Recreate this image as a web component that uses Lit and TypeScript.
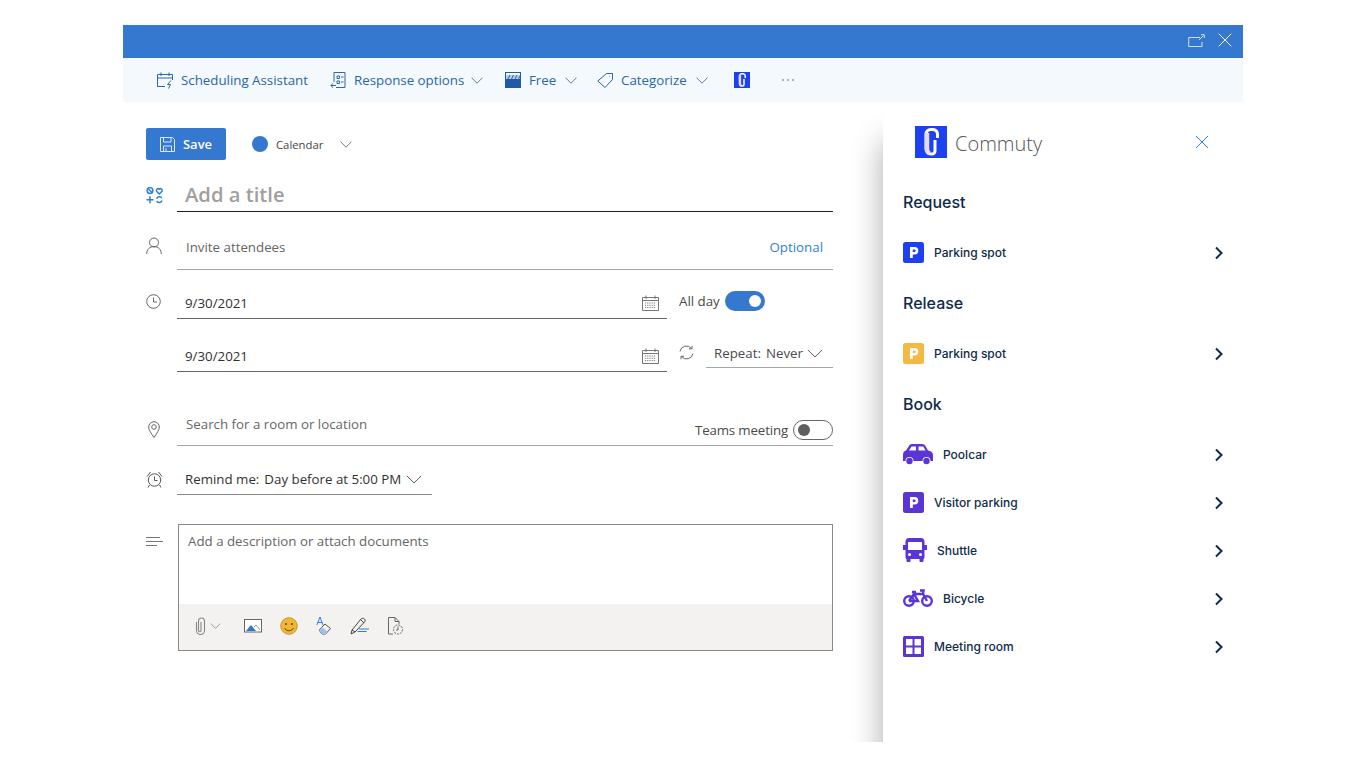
import { LitElement, html, css, svg } from "lit";
import { customElement } from "lit/decorators.js";

const chev = (c = "#5a7fa8", w = 12) => html`<svg class="chev" width=${w} height=${Math.round((w * 7) / 12)} viewBox="0 0 12 7" fill="none"><path d="M.5.7 6 6.200 11.500.7" stroke=${c} stroke-width=${12 / w}/></svg>`;
const logo = (s: number) => html`<svg width=${s} height=${s} viewBox="0 0 32 32"><rect width="32" height="32" fill="#1c41f2"/><path d="M22.500 12V8A4.500 4.500 0 0 0 18 3.500h-2.500A4.500 4.500 0 0 0 11 8v15a5 5 0 0 0 5 5h1a3 3 0 0 0 3-3V14" fill="none" stroke="#fff" stroke-width="3"/><path d="M12 7v16c0 2 1 3.500 2.500 4.500" fill="none" stroke="#e4dcff" stroke-width="4.500"/></svg>`;
const ico = (w: number, h: number, body: unknown, stroke = "#666") => html`<svg width=${w} height=${h} viewBox="0 0 ${w} ${h}" fill="none" stroke=${stroke} stroke-width="1">${body}</svg>`;

const tbBlue = "#2a66a8";
const calSmall = ico(17, 16, svg`<path d="M.5 2.500h16v13H.5zM.5 5.500h16M4 .5v3.500M13 .5v3.500"/><path d="M3 8h11M3 10.300h11M3 12.600h11" stroke-dasharray="1.200 1"/>`, "#777");

const pIcon = (c: string) => html`<svg width="21" height="21" viewBox="0 0 21 21"><rect width="21" height="21" rx="2.500" fill=${c}/><path d="M7 16V5h4.600a3.700 3.700 0 0 1 0 7.400H9.800V16zM9.800 7.400v2.700h1.500a1.350 1.350 0 0 0 0-2.700z" fill="#fff" fill-rule="evenodd"/></svg>`;
const purple = "#5b34d6";
const car = html`<svg width="30" height="21" viewBox="0 0 30 21"><path fill-rule="evenodd" fill=${purple} d="M9 0h10c1.700 0 2.800.8 3.600 2.200L25 6.500c3 .6 5 1.800 5 4.500v6h-2.500a4 4 0 0 0-8 0h-9a4 4 0 0 0-8 0H0v-6c0-2.500 1-4 3-4.500l2.800-4.300C6.600.8 7.400 0 9 0zM8.500 2.500 6 6.500h7V2.500zM15.500 2.500v4h7l-2.200-4z"/><circle cx="6.500" cy="17" r="3.200" fill=${purple}/><circle cx="23.500" cy="17" r="3.200" fill=${purple}/></svg>`;
const bus = html`<svg width="24" height="24" viewBox="0 0 24 24"><path fill-rule="evenodd" fill=${purple} d="M6 0h12c2 0 3.500 1.500 3.500 3.500V7H24v5h-2.500v7.500c0 .8-.5 1.300-1 1.500v2a1 1 0 0 1-1 1h-2a1 1 0 0 1-1-1v-2h-9v2a1 1 0 0 1-1 1h-2a1 1 0 0 1-1-1v-2c-.5-.2-1-.7-1-1.500V12H0V7h2.500V3.500C2.500 1.500 4 0 6 0zM5 4v8h14V4zM6.500 15a1.500 1.500 0 1 0 0 3 1.500 1.500 0 0 0 0-3zM17.500 15a1.500 1.500 0 1 0 0 3 1.500 1.500 0 0 0 0-3z"/></svg>`;
const bike = html`<svg width="30" height="18" viewBox="0 0 30 18" fill="none" stroke=${purple} stroke-width="2.400"><circle cx="6" cy="12" r="4.800"/><circle cx="24" cy="12" r="4.800"/><path d="M6 12 11 5h9l4 7M11 5l4 7H6M17 1.500h3.500L20 5M9 3h4"/></svg>`;
const room = html`<svg width="21" height="21" viewBox="0 0 21 21"><rect width="21" height="21" rx="1.500" fill=${purple}/><path d="M3 3h6.500v6.500H3zM11.500 3H18v6.500h-6.500zM3 11.500h6.500V18H3zM11.500 11.500H18V18h-6.500z" fill="#fff"/></svg>`;

@customElement("app-root")
export class AppRoot extends LitElement {
  static styles = css`
    :host { display: block; height: 768px; background: #fff; font-family: "Open Sans", "Noto Sans", sans-serif; }
    svg { display: block; flex: none; }
    .win { position: relative; top: 25px; margin-left: 123px; width: 1120px; height: 717px; display: flex; flex-direction: column; overflow: hidden; }
    .title { height: 33px; flex: none; background: #3578cf; display: flex; align-items: center; justify-content: flex-end; gap: 13px; padding: 0 11px 3px 0; box-sizing: border-box; }
    .tb { height: 44px; flex: none; background: #f3f9fc; display: flex; align-items: center; color: #2a66a8; font-size: 13.300px; padding-left: 34px; }
    .tb .it { display: flex; align-items: center; gap: 7px; flex: none; }
    .tb .chev { margin-left: 1px; }
    .tb .i2 .chev { margin-left: 0; }
    .tb .i4 .chev { margin-left: 2px; }
    .tb .i3 { gap: 8px; }
    .i1 { width: 173px; } .i2 { width: 175px; } .i3 { width: 92px; } .i4 { width: 137px; } .i5 { width: 48px; }
    .dots { display: flex; gap: 2px; }
    .dots b { width: 2px; height: 2px; border-radius: 50%; background: #7d9fc6; margin-right: 1px; }
    .main { flex: 1; display: flex; min-height: 0; }
    .form { width: 760px; flex: none; padding: 26px 50px 0 23px; box-sizing: border-box; color: #323130; font-size: 13.300px; }
    .bar { display: flex; align-items: center; height: 32px; }
    .save { width: 80px; height: 32px; background: #3578cf; border-radius: 2px; color: #fff; font-weight: 600; font-size: 13px; display: flex; align-items: center; justify-content: center; gap: 8px; }
    .cal-dot { width: 16px; height: 16px; border-radius: 50%; background: #3578cf; margin-left: 26px; }
    .cal-name { font-size: 11.300px; margin-left: 8px; margin-right: 17px; color: #444; }
    .row { display: flex; }
    .ic { width: 31px; flex: none; }
    .f { flex: 1; box-sizing: border-box; display: flex; align-items: center; min-width: 0; }
    .r-title { margin-top: 19px; height: 33px; }
    .r-title .f { border-bottom: 1px solid #201f1e; font-size: 20.200px; font-weight: 600; color: #a19f9d; padding-left: 8px; padding-bottom: 3px; }
    .r-title .ic { padding-top: 8px; }
    .r-inv { margin-top: 14px; height: 44px; }
    .r-inv .f { border-bottom: 1px solid #a6a6a6; padding: 0 10px 2px 9px; justify-content: space-between; color: #666; }
    .r-inv .ic { padding-top: 11px; }
    .opt { color: #2f7fd6; }
    .r-date { margin-top: 16px; height: 33px; }
    .r-date2 { margin-top: 20px; height: 33px; }
    .r-date .ic { padding-top: 8px; }
    .dt { width: 490px; flex: none; border-bottom: 1px solid #666; justify-content: space-between; padding: 2px 8px 0 8px; }
    .allday { display: flex; align-items: center; gap: 5px; margin-left: 12px; height: 30px; color: #4a4a4a; }
    .tg { width: 40px; height: 20px; border-radius: 10px; background: #3578cf; display: flex; align-items: center; justify-content: flex-end; padding: 0 4px; box-sizing: border-box; }
    .tg i { width: 12px; height: 12px; border-radius: 50%; background: #fff; display: block; }
    .tg.off { background: #fff; border: 1px solid #666; justify-content: flex-start; }
    .tg.off i { background: #605e5c; }
    .sync { margin: 6px 0 0 12px; }
    .rep { margin-left: 12px; width: 127px; height: 29px; box-sizing: border-box; border-bottom: 1px solid #a6a6a6; display: flex; align-items: center; gap: 5px; padding-left: 8px; color: #4a4a4a; }
    .rep svg { margin-left: -1px; }
    .r-loc { margin-top: 32px; height: 42px; }
    .r-loc .ic { padding-top: 17px; padding-left: 2px; box-sizing: border-box; }
    .r-loc .f { border-bottom: 1px solid #a6a6a6; padding: 0 0 0 9px; justify-content: space-between; color: #666; }
    .r-loc .ph { margin-bottom: 2px; }
    .teams { display: flex; align-items: center; gap: 5px; margin-top: 10px; color: #4a4a4a; letter-spacing: -.15px; }
    .r-rem { margin-top: 17px; height: 32px; }
    .r-rem .ic { padding-top: 8px; }
    .r-rem .f { flex: none; width: 255px; border-bottom: 1px solid #8a8886; padding-left: 8px; gap: 5px; padding-top: 1px; }
    .r-desc { margin-top: 29px; height: 127px; }
    .r-desc .ic { padding-top: 12px; }
    .box { margin-left: 1px; flex: 1; border: 1px solid #8a8886; display: flex; flex-direction: column; box-sizing: border-box; }
    .box .txt { flex: 1; padding: 7px 9px; color: #666; }
    .foot { height: 46px; background: #f3f2f1; display: flex; align-items: center; padding: 0 0 3px 16px; box-sizing: border-box; }
    .g4 { margin-left: 4px; } .g19 { margin-left: 23px; } .g18 { margin-left: 18px; } .g20 { margin-left: 18px; }
    .panel { flex: 1; box-sizing: border-box; position: relative; background: #fff; box-shadow: 0 40px 30px rgba(0,0,0,.33); padding: 24px 0 0 20px; font-family: Inter, sans-serif; color: #0f2b4c; display: flex; flex-direction: column; }
    .ph-head { display: flex; align-items: center; padding-left: 12px; height: 32px; color: #555; font-family: "Open Sans", sans-serif; font-weight: 300; font-size: 20px; }
    .ph-head .nm { margin-left: 8px; flex: 1; padding-top: 2px; }
    .ph-head svg:last-child { margin-right: 34px; }
    h2 { margin: 0; font-size: 16px; font-weight: 500; line-height: 20px; }
    .h1 { margin-top: 34px; } .h2 { margin-top: 17px; }
    .item { height: 48px; display: flex; align-items: center; font-size: 12px; font-weight: 500; position: relative; }
    .item.first { margin-top: 16px; }
    .item .lbl { margin-left: 10px; flex: 1; }
    .item > svg:last-child { margin: 2px 19px 0 0; }
  `;

  private pitem(icon: unknown, label: string, first = false) {
    return html`<div class="item ${first ? "first" : ""}">${icon}<span class="lbl">${label}</span><svg width="10" height="14" viewBox="0 0 10 14" fill="none"><path d="M2 1.500 7.500 7 2 12.500" stroke="#0f2b4c" stroke-width="2"/></svg></div>`;
  }

  render() {
    const b = tbBlue;
    return html`
    <div class="win">
      <div class="title">
        ${ico(17, 13, svg`<path d="M12 3.500H.7v9h13.300V8"/><path d="M11 6 15.500 1.500M13 .7h3.300v3.300" />`, "#cfe0f5")}
        ${ico(14, 14, svg`<path d="M.7.700 13.300 13.300M13.300.7.700 13.300"/>`, "#fff")}
      </div>
      <div class="tb">
        <div class="it i1">${ico(17, 17, svg`<path d="M8 14.500H.5v-12h15V8M.5 6h15M4 .5v3.500M12 .5v3.500"/><path d="M14 8.500 10.500 12.500h3l-2 4" />`, b)}<span>Scheduling Assistant</span></div>
        <div class="it i2">${ico(17, 17, svg`<path d="M4 10V.5h11v15H6M7 4h2.500v2.500H7zM11 5h2.500M7 9h2.500v2.500H7zM11 10h2.500M6 13.500H.8M3 11.500l-2.200 2 2.200 2"/>`, b)}<span>Response options</span>${chev()}</div>
        <div class="it i3"><svg width="16" height="16" viewBox="0 0 16 16"><rect width="16" height="16" fill="#1f5aa6"/><rect x="1" y="1" width="14" height="6" fill="#f3f9fc"/><path d="M1 7h14V3H1z" fill="#bcd0e6"/><path d="M3 7l2-4M6.500 7l2-4M10 7l2-4M13.500 7l1.500-3" stroke="#1f5aa6" stroke-width="1"/></svg><span>Free</span>${chev()}</div>
        <div class="it i4">${ico(17, 17, svg`<path d="M9.500 1.500h6v6L8 15.500.8 9zM12.500 4.200h.5"/>`, b)}<span>Categorize</span>${chev()}</div>
        <div class="i5">${logo(16)}</div>
        <div class="dots"><b></b><b></b><b></b></div>
      </div>
      <div class="main">
        <div class="form">
          <div class="bar">
            <div class="save">${ico(15, 15, svg`<path d="M.5.5h12l2 2v12H.5zM3.500.5v4.500h7.500V.5M3.500 14.500V9h8v5.500M6 11v3.500"/>`, "#dbe8f8")}<span>Save</span></div>
            <div class="cal-dot"></div><span class="cal-name">Calendar</span>${chev("#777", 12)}
          </div>
          <div class="row r-title">
            <div class="ic">${ico(18, 17, svg`<g stroke-width="1.500"><circle cx="4" cy="3.500" r="2.900"/><path d="M2 1.500l4 4M13.300 7 10.600 4.200a1.700 1.700 0 0 1 2.700-2 1.700 1.700 0 0 1 2.700 2zM.5 12.700h7M4 9.200v7M10.600 11.800a3 3 0 0 1 5.300-.8M16 13.500a3 3 0 0 1-5.300.8"/></g>`, "#2f7fd6")}</div>
            <div class="f">Add a title</div>
          </div>
          <div class="row r-inv">
            <div class="ic">${ico(16, 17, svg`<circle cx="8" cy="5.500" r="4.500"/><path d="M.7 17c0-4.500 3-7.500 7.300-7.500s7.300 3 7.300 7.500"/>`, "#666")}</div>
            <div class="f"><span>Invite attendees</span><span class="opt">Optional</span></div>
          </div>
          <div class="row r-date">
            <div class="ic">${ico(15, 15, svg`<circle cx="7.500" cy="7.500" r="6.800"/><path d="M7.500 3.500v4.500h3.500"/>`, "#666")}</div>
            <div class="f dt"><span>9/30/2021</span>${calSmall}</div>
            <div class="allday"><span>All day</span><div class="tg"><i></i></div></div>
          </div>
          <div class="row r-date2">
            <div class="ic"></div>
            <div class="f dt"><span>9/30/2021</span>${calSmall}</div>
            <div class="sync">${ico(15, 15, svg`<path d="M1 6.500a6.500 6.500 0 0 1 11.500-3M14 8.500a6.500 6.500 0 0 1-11.500 3M13 .8v3h-3M2 14.200v-3h3"/>`, "#666")}</div>
            <div class="rep"><span>Repeat:</span><span>Never</span>${chev("#555", 16)}</div>
          </div>
          <div class="row r-loc">
            <div class="ic">${ico(12, 17, svg`<path d="M6 16.500C3 12 .7 9 .7 6a5.300 5.300 0 0 1 10.600 0c0 3-2.300 6-5.300 10.500z"/><circle cx="6" cy="6" r="2.300"/>`, "#666")}</div>
            <div class="f"><span class="ph">Search for a room or location</span><div class="teams"><span>Teams meeting</span><div class="tg off"><i></i></div></div></div>
          </div>
          <div class="row r-rem">
            <div class="ic">${ico(17, 17, svg`<circle cx="8.500" cy="9" r="6.200"/><path d="M8.500 5.500v4h3M1 5.500l3.500-4.500M16 5.500l-3.500-4.500M3.500 14 2 16.500M13.500 14l1.500 2.500"/>`, "#555")}</div>
            <div class="f"><span>Remind me:</span><span>Day before at 5:00 PM</span>${chev("#555", 16)}</div>
          </div>
          <div class="row r-desc">
            <div class="ic">${ico(17, 11, svg`<path d="M0 1.500h14M0 5.500h17M0 9.500h11"/>`, "#777")}</div>
            <div class="box">
              <div class="txt">Add a description or attach documents</div>
              <div class="foot">
                ${ico(11, 18, svg`<path d="M1.500 5v8.500a4 4 0 0 0 8 0V4a3 3 0 0 0-6 0v9.500a1 1 0 0 0 2.500 0V5" stroke-width="1.100"/>`, "#8a8886")}
                <span class="g4"></span>${chev("#999", 11)}
                <span class="g19"></span>
                <svg width="18" height="14" viewBox="0 0 18 14"><rect x=".5" y=".5" width="17" height="12.500" fill="#fff" stroke="#666"/><path d="M2 12 7 6l5 6z" fill="#2f74d0"/><path d="M10 8l2-2 4 5" fill="none" stroke="#999"/></svg>
                <span class="g20"></span>
                <svg width="18" height="18" viewBox="0 0 18 18"><circle cx="9" cy="9" r="8.300" fill="#f2b632" stroke="#b58a1e" stroke-width=".8"/><circle cx="6" cy="7" r="1" fill="#5d4a14"/><circle cx="12" cy="7" r="1" fill="#5d4a14"/><path d="M4.500 11a5 5 0 0 0 9 0" fill="none" stroke="#5d4a14"/></svg>
                <span class="g20"></span>
                <svg width="16" height="19" viewBox="0 0 16 19" fill="none"><path d="M.8 9 4 1l3 8M2 6.500h4" stroke="#2f7fd6"/><path d="M3 14l6-6 5.500 4.500-5 5.500H6z" stroke="#555"/><path d="M3 14l3-3 5.500 4.500-2 2.500H6z" fill="#9cc3ee"/></svg>
                <span class="g18"></span>
                <svg width="20" height="18" viewBox="0 0 20 18" fill="none"><path d="M1 17l1-4L11 2c1-1 2.500-1 3.500 0s.8 2 0 3L5 15zM2 13l3 2M11 3l3 3" stroke="#444"/><path d="M9 12h10M7.500 14.500h9" stroke="#2f7fd6"/></svg>
                <span class="g20"></span>
                <svg width="16" height="18" viewBox="0 0 16 18" fill="none" stroke="#666"><path d="M5 17H.5V.5H7l4 4V7M7 .5v4h4"/><circle cx="10" cy="12.500" r="4.500" stroke-dasharray="2 1"/><path d="M10 9.500v3.500h-2"/></svg>
              </div>
            </div>
          </div>
        </div>
        <div class="panel">
          <div class="ph-head">${logo(32)}<span class="nm">Commuty</span>
            ${ico(14, 14, svg`<path d="M1 1l12 12M13 1 1 13"/>`, "#2f7fd6")}
          </div>
          <h2 class="h1">Request</h2>
          ${this.pitem(pIcon("#1c41f2"), "Parking spot", true)}
          <h2 class="h2">Release</h2>
          ${this.pitem(pIcon("#f4b942"), "Parking spot", true)}
          <h2 class="h2">Book</h2>
          ${this.pitem(car, "Poolcar", true)}
          ${this.pitem(pIcon(purple), "Visitor parking")}
          ${this.pitem(bus, "Shuttle")}
          ${this.pitem(bike, "Bicycle")}
          ${this.pitem(room, "Meeting room")}
        </div>
      </div>
    </div>`;
  }
}
